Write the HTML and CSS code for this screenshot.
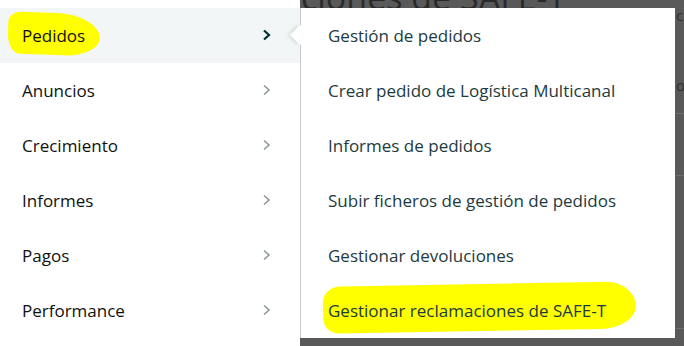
FILE: index.html
```html
<!DOCTYPE html>
<html lang="es">
<head>
    <meta charset="UTF-8">
    <title>Pedidos</title>
    <link rel="stylesheet" href="styles.css">
</head>
<body>
    <nav class="nav">
        <div class="nav-item active">
            <span class="mark mark-nav"></span>
            <span class="nav-label">Pedidos</span>
            <svg class="chevron" width="10" height="12" viewBox="0 0 10 12"><polyline points="2,1.5 7,6 2,10.5" fill="none" stroke="currentColor" stroke-width="2.2"/></svg>
        </div>
        <div class="nav-item">
            <span class="nav-label">Anuncios</span>
            <svg class="chevron" width="10" height="12" viewBox="0 0 10 12"><polyline points="2,1.5 7,6 2,10.5" fill="none" stroke="currentColor" stroke-width="1.6"/></svg>
        </div>
        <div class="nav-item">
            <span class="nav-label">Crecimiento</span>
            <svg class="chevron" width="10" height="12" viewBox="0 0 10 12"><polyline points="2,1.5 7,6 2,10.5" fill="none" stroke="currentColor" stroke-width="1.6"/></svg>
        </div>
        <div class="nav-item">
            <span class="nav-label">Informes</span>
            <svg class="chevron" width="10" height="12" viewBox="0 0 10 12"><polyline points="2,1.5 7,6 2,10.5" fill="none" stroke="currentColor" stroke-width="1.6"/></svg>
        </div>
        <div class="nav-item">
            <span class="nav-label">Pagos</span>
            <svg class="chevron" width="10" height="12" viewBox="0 0 10 12"><polyline points="2,1.5 7,6 2,10.5" fill="none" stroke="currentColor" stroke-width="1.6"/></svg>
        </div>
        <div class="nav-item">
            <span class="nav-label">Performance</span>
            <svg class="chevron" width="10" height="12" viewBox="0 0 10 12"><polyline points="2,1.5 7,6 2,10.5" fill="none" stroke="currentColor" stroke-width="1.6"/></svg>
        </div>
    </nav>

    <main class="stage">
        <h1 class="page-title">ciones de SAFE-T</h1>
        <div class="backdrop">
            <div class="backdrop-text">c</div>
            <div class="backdrop-text second">o</div>
            <div class="backdrop-line first"></div>
            <div class="backdrop-line tall"></div>
            <div class="backdrop-line last"></div>
        </div>

        <div class="submenu">
            <span class="pointer"></span>
            <a class="sub-item">Gestión de pedidos</a>
            <a class="sub-item">Crear pedido de Logística Multicanal</a>
            <a class="sub-item">Informes de pedidos</a>
            <a class="sub-item">Subir ficheros de gestión de pedidos</a>
            <a class="sub-item">Gestionar devoluciones</a>
            <a class="sub-item">
                <span class="mark mark-sub"></span>
                <span class="sub-label">Gestionar reclamaciones de SAFE-T</span>
            </a>
        </div>
    </main>
</body>
</html>
```

FILE: styles.css
```css
body {
    margin: 0;
    width: 684px;
    height: 346px;
    overflow: hidden;
    display: flex;
    background-color: #595959;
    font-family: 'Open Sans', 'Noto Sans', sans-serif;
}
.nav {
    width: 300px;
    flex-shrink: 0;
    background-color: #fff;
    padding-top: 8px;
}
.nav-item {
    position: relative;
    height: 55px;
    display: flex;
    align-items: center;
    justify-content: space-between;
    padding: 0 28px 1px 22px;
    box-sizing: border-box;
    font-size: 17px;
    color: #0f1111;
}
.nav-item.active {
    background-color: #f3f6f6;
}
.nav-label {
    position: relative;
}
.chevron {
    color: #8d9999;
}
.active .chevron {
    color: #002f36;
}
.mark {
    position: absolute;
    background-color: #ffff00;
}
.mark-nav {
    left: 8px;
    top: 5px;
    width: 92px;
    height: 42px;
    border-radius: 14% 50% 40% 14% / 25% 60% 45% 50%;
    transform: rotate(2deg);
}
.mark-sub {
    left: 22px;
    top: 1px;
    width: 313px;
    height: 47px;
    border-radius: 6% 10% 12% 5% / 35% 55% 50% 35%;
    transform: rotate(-1deg);
}
.stage {
    position: relative;
    flex: 1;
}
.page-title {
    margin: -23px 0 0 1px;
    font-size: 34px;
    font-weight: 400;
    line-height: 40px;
    color: #2a2a2a;
    white-space: nowrap;
}
.backdrop {
    margin-top: -12px;
    padding-left: 376px;
    font-size: 15px;
    color: #2e2e2e;
}
.backdrop-text {
    line-height: 20px;
}
.backdrop-text.second {
    margin-top: 50px;
}
.backdrop-line {
    height: 61px;
    border-top: 1px solid #6e6e6e;
}
.backdrop-line.first {
    margin-top: 18px;
}
.backdrop-line.tall {
    height: 152px;
}
.backdrop-line.last {
    height: 0;
}
.submenu {
    position: absolute;
    left: 0;
    top: 8px;
    width: 374px;
    height: 330px;
    background-color: #fff;
    border-left: 1px solid #c8c8c8;
}
.pointer {
    position: absolute;
    left: -8px;
    top: 20px;
    width: 14px;
    height: 14px;
    background-color: #fff;
    transform: rotate(45deg);
    box-shadow: -2px 2px 4px rgba(0, 0, 0, 0.1);
}
.sub-item {
    position: relative;
    display: flex;
    align-items: center;
    height: 55px;
    padding: 0 0 1px 27px;
    box-sizing: border-box;
    font-size: 17px;
    color: #1c3a40;
}
.sub-label {
    position: relative;
}
```
